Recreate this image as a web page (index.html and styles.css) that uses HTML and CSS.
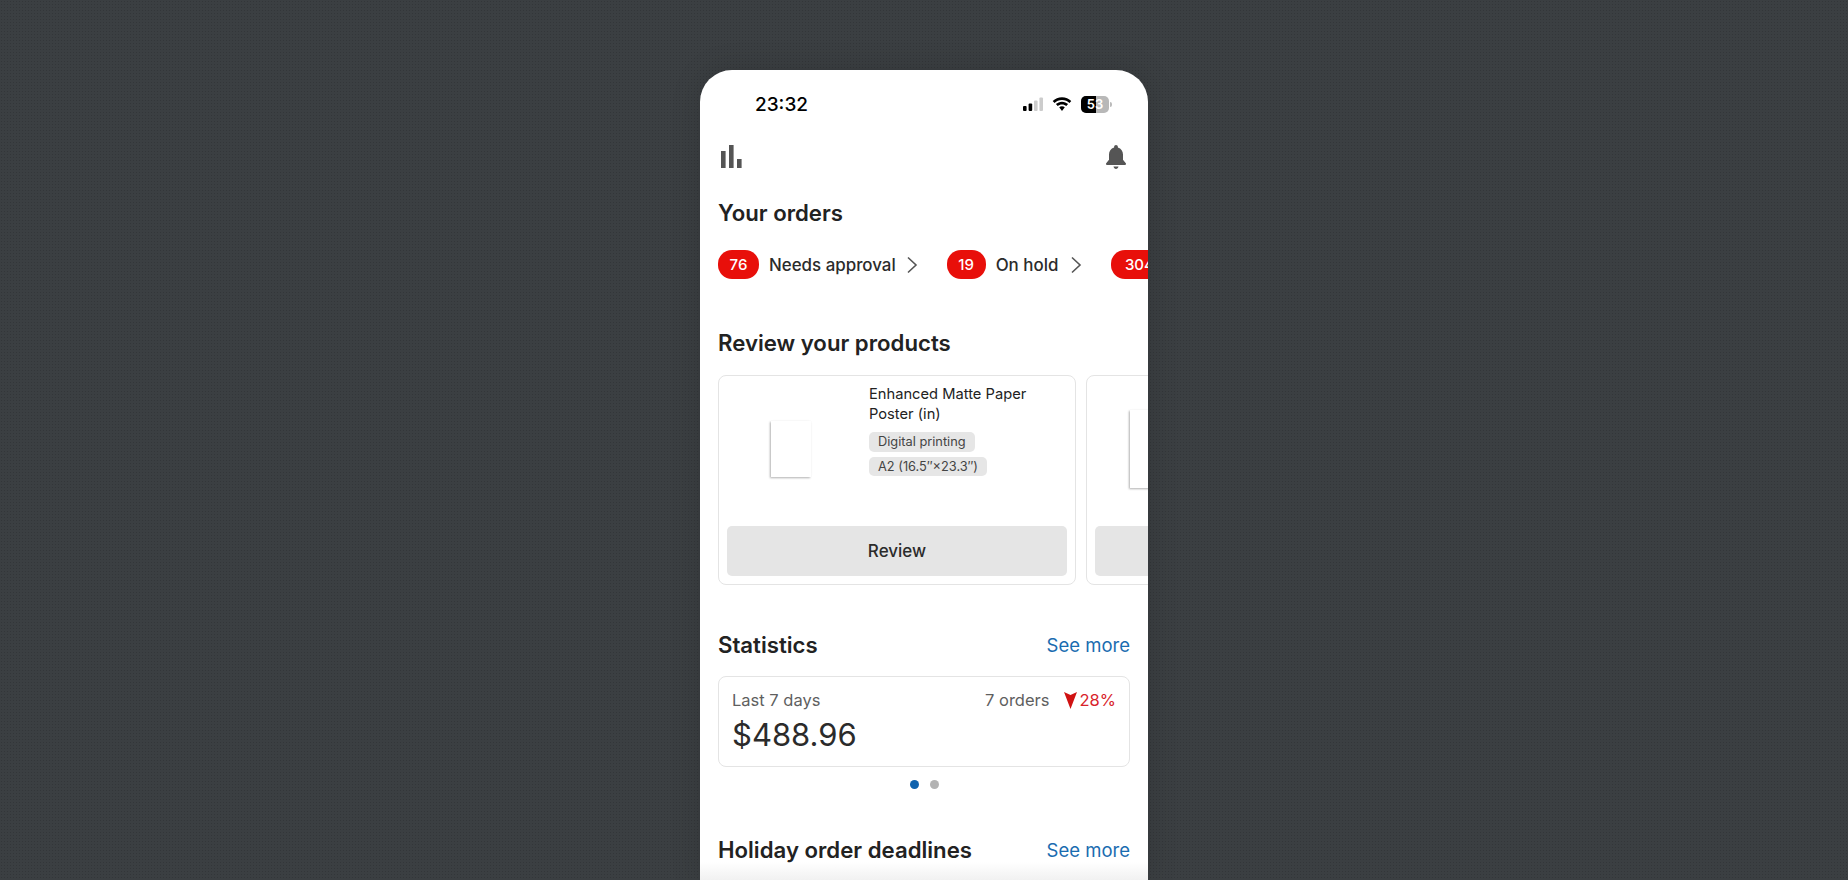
FILE: index.html
```html
<!DOCTYPE html>
<html lang="en">
<head>
    <meta charset="UTF-8">
    <title>Orders</title>
    <link rel="stylesheet" href="styles.css">
</head>
<body>
    <div class="phone">
        <div class="status">
            <span class="time">23:32</span>
            <div class="status-icons">
                <svg width="24" height="16" viewBox="0 0 24 16"><rect x="2" y="10" width="3.6" height="5" rx="1" fill="#000"/><rect x="7.6" y="7.5" width="3.6" height="7.5" rx="1" fill="#000"/><rect x="13" y="4.5" width="3.6" height="10.5" rx="1" fill="#ccc"/><rect x="18.4" y="1.5" width="3.6" height="13.5" rx="1" fill="#ccc"/></svg>
                <svg class="wifi" width="20" height="15" viewBox="0 0 20 15"><path d="M10 3c3 0 5.500 1.100 7.500 3l1.800-2C16.900 1.600 13.600.200 10 .200S3.100 1.600.700 4l1.800 2C4.500 4.100 7 3 10 3zM10 7.400c1.700 0 3.200.600 4.300 1.700l1.800-2C14.500 5.600 12.400 4.700 10 4.700s-4.500.900-6.100 2.400l1.800 2c1.100-1.100 2.600-1.700 4.300-1.700zM10 9.200c-1.100 0-2.100.400-2.800 1.100L10 14l2.800-3.700c-.700-.700-1.700-1.100-2.800-1.100z" fill="#000"/></svg>
                <div class="battery"><span class="battery-fill"></span><span class="battery-num">53</span></div>
                <span class="battery-cap"></span>
            </div>
        </div>

        <div class="topbar">
            <svg width="22" height="24" viewBox="0 0 22 24"><rect x="1" y="6" width="4.600" height="17" fill="#555"/><rect x="9" y="0" width="4.600" height="23" fill="#555"/><rect x="17" y="14" width="4.600" height="9" fill="#555"/></svg>
            <svg width="22" height="25" viewBox="0 0 22 25"><path d="M11 0c-1.100 0-1.900.800-1.900 1.900v.500C5.800 3.300 4 6.200 4 9.500v5.300L1.200 18.300c-.600.800-.100 1.700.900 1.700h17.800c1 0 1.500-.900.900-1.700L18 14.800V9.500c0-3.300-1.800-6.200-5.100-7.100v-.500C12.900.800 12.100 0 11 0zM8.500 21.500c.300 1.300 1.300 2.500 2.500 2.500s2.200-1.200 2.500-2.500z" fill="#555"/></svg>
        </div>

        <h2 class="title first">Your orders</h2>
        <div class="chips">
            <span class="badge b76">76</span><span class="chip-label">Needs approval</span>
            <svg class="chev" width="12" height="18" viewBox="0 0 12 18"><path d="M2 1.500 10 9l-8 7.500" fill="none" stroke="#555" stroke-width="1.600"/></svg>
            <span class="badge b19">19</span><span class="chip-label">On hold</span>
            <svg class="chev hold" width="12" height="18" viewBox="0 0 12 18"><path d="M2 1.500 10 9l-8 7.500" fill="none" stroke="#555" stroke-width="1.600"/></svg>
            <span class="badge b304">304</span>
        </div>

        <h2 class="title review-title">Review your products</h2>
        <div class="cards">
            <div class="card">
                <div class="card-top">
                    <div class="thumb"><div class="paper"></div></div>
                    <div class="info">
                        <div class="name">Enhanced Matte Paper Poster (in)</div>
                        <span class="tag">Digital printing</span>
                        <span class="tag">A2 (16.5″×23.3″)</span>
                    </div>
                </div>
                <div class="btn">Review</div>
            </div>
            <div class="card">
                <div class="card-top">
                    <div class="thumb"><div class="paper big"></div></div>
                </div>
                <div class="btn"></div>
            </div>
        </div>

        <div class="head stats-head">
            <h2 class="title">Statistics</h2>
            <a class="more">See more</a>
        </div>
        <div class="stat">
            <div class="stat-row">
                <span>Last 7 days</span>
                <span class="orders">7 orders</span>
                <svg class="down" width="13" height="17" viewBox="0 0 13 17"><path d="M0 0 6.500 3 13 0 6.500 17z" fill="#d01212"/></svg>
                <span class="pct">28%</span>
            </div>
            <div class="amount">$488.96</div>
        </div>
        <div class="dots"><span class="dot on"></span><span class="dot"></span></div>

        <div class="head holiday">
            <h2 class="title">Holiday order deadlines</h2>
            <a class="more">See more</a>
        </div>
        <div class="fade"></div>
    </div>
</body>
</html>
```

FILE: styles.css
```css
/* page */
html, body {
    margin: 0;
    height: 880px;
    overflow: hidden;
}
body {
    font-family: Inter, "Liberation Sans", sans-serif;
    background-color: #3b3f42;
    background-image: radial-gradient(rgba(0, 0, 0, 0.14) 0.7px, transparent 0.8px);
    background-size: 3px 3px;
    color: #222;
    display: flex;
    justify-content: center;
    padding-top: 70px;
    box-sizing: border-box;
}
.phone {
    position: relative;
    width: 448px;
    height: 810px;
    background-color: #fff;
    border-radius: 32px 32px 0 0;
    overflow: hidden;
    box-shadow: 0 0 30px rgba(0, 0, 0, 0.15);
    flex: none;
}

/* status bar */
.status {
    height: 40px;
    padding-top: 14px;
    padding-left: 55px;
    padding-right: 36px;
    display: flex;
    justify-content: space-between;
    align-items: center;
}
.time {
    font-size: 19px;
    font-weight: 500;
    color: #000;
}
.status-icons {
    display: flex;
    align-items: center;
    gap: 5px;
}
.wifi {
    margin-left: 2px;
}
.battery {
    position: relative;
    width: 28px;
    height: 17px;
    border-radius: 5px;
    background-color: #b8b8b8;
    overflow: hidden;
    margin-left: 4px;
    font-size: 13px;
    font-weight: 600;
    line-height: 17px;
    text-align: center;
    color: #fff;
}
.battery-fill {
    position: absolute;
    left: 0;
    top: 0;
    bottom: 0;
    width: 15px;
    background-color: #000;
}
.battery-num {
    position: relative;
}
.battery-cap {
    width: 2px;
    height: 5px;
    margin-left: -4px;
    background-color: #bbb;
    border-radius: 0 2px 2px 0;
}

/* top icons */
.topbar {
    display: flex;
    justify-content: space-between;
    padding: 0 21px 0 20px;
    margin-top: 20px;
    height: 26px;
    align-items: center;
}

/* headings */
.title {
    margin: 0;
    font-size: 22.200px;
    font-weight: 600;
    line-height: 28px;
    color: #222;
}
.first {
    margin: 29px 18px 0;
}
.review-title {
    margin: 50px 18px 0;
}

/* order chips */
.chips {
    display: flex;
    align-items: center;
    margin-top: 23px;
    padding-left: 18px;
    white-space: nowrap;
}
.badge {
    flex: none;
    height: 29px;
    line-height: 29px;
    border-radius: 14px;
    background-color: #e80f0a;
    color: #fff;
    font-size: 15px;
    font-weight: 500;
    text-align: center;
}
.b76 { width: 41px; }
.b19 { width: 39px; }
.b304 { width: 56px; }
.chip-label {
    margin-left: 10px;
    font-size: 16.900px;
    font-weight: 500;
    color: #2b2b2b;
}
.chev {
    margin-left: 10px;
    margin-right: 29px;
    flex: none;
}
.chev.hold {
    margin-left: 12px;
}

/* product cards */
.cards {
    display: flex;
    gap: 10px;
    margin-top: 18px;
    padding-left: 18px;
}
.card {
    flex: none;
    width: 358px;
    height: 210px;
    border: 1px solid #e4e4e4;
    border-radius: 8px;
    box-sizing: border-box;
    padding: 8px;
    display: flex;
    flex-direction: column;
}
.card-top {
    flex: 1;
    display: flex;
}
.thumb {
    width: 142px;
    flex: none;
    position: relative;
}
.paper {
    position: absolute;
    left: 44px;
    top: 37px;
    width: 40px;
    height: 56px;
    background-color: #fff;
    box-shadow: -1px 1px 2px rgba(0, 0, 0, 0.3), 0 0 4px rgba(0, 0, 0, 0.02);
}
.paper.big {
    left: 35px;
    top: 26px;
    width: 56px;
    height: 78px;
}
.info {
    display: flex;
    flex-direction: column;
    align-items: flex-start;
}
.name {
    font-size: 14.700px;
    line-height: 20px;
    color: #222;
    margin-bottom: 8px;
    width: 170px;
}
.tag {
    font-size: 12.800px;
    line-height: 19.500px;
    padding: 0 9px;
    background-color: #e6e6e6;
    color: #444;
    border-radius: 5px;
    margin-bottom: 5px;
}
.btn {
    height: 50px;
    line-height: 50px;
    background-color: #e5e5e5;
    border-radius: 5px;
    text-align: center;
    font-size: 17px;
    font-weight: 500;
    color: #2b2b2b;
    flex: none;
}

/* statistics */
.head {
    display: flex;
    justify-content: space-between;
    align-items: center;
    padding: 0 18px;
}
.stats-head {
    margin-top: 46px;
}
.more {
    font-size: 18.500px;
    color: #1a6cb0;
}
.stat {
    margin: 17px 18px 0;
    height: 91px;
    border: 1px solid #e4e4e4;
    border-radius: 8px;
    box-sizing: border-box;
    padding: 12px 13px;
}
.stat-row {
    display: flex;
    align-items: center;
    font-size: 16.500px;
    line-height: 22px;
    color: #5f5f5f;
}
.orders {
    margin-left: auto;
}
.down {
    margin-left: 14px;
    margin-right: 3px;
}
.pct {
    color: #d8232a;
}
.amount {
    font-size: 31px;
    line-height: 40px;
    margin-top: 4px;
    color: #2b2b2b;
}
.dots {
    display: flex;
    justify-content: center;
    gap: 11px;
    margin-top: 13px;
}
.dot {
    width: 9px;
    height: 9px;
    border-radius: 50%;
    background-color: #b3b3b3;
}
.dot.on {
    background-color: #0f62ad;
}
.holiday {
    margin-top: 47px;
}
.fade {
    position: absolute;
    left: 0;
    right: 0;
    bottom: 0;
    height: 18px;
    background: linear-gradient(rgba(240, 240, 240, 0), #f1f1f1);
}
```
